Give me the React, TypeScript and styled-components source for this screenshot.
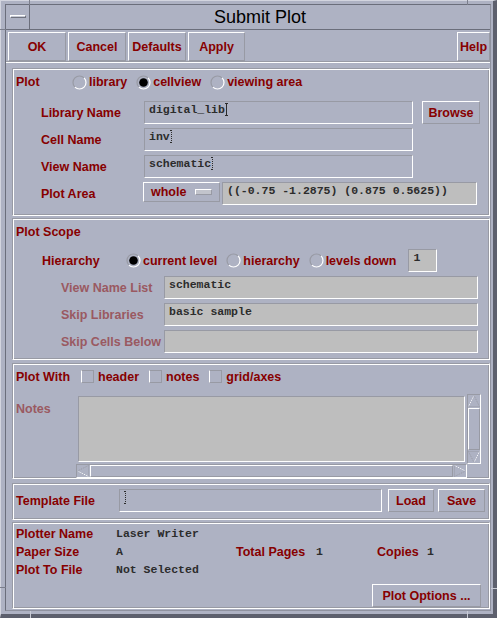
import React from 'react';
import styled, { createGlobalStyle, css } from 'styled-components';

const C = {
  bg: '#aeb2c3',
  field: '#bebebe',
  dark: '#989aa4',
  light: '#ffffff',
  red: '#870000',
  dim: '#9a5961',
  text: '#2c2c2c',
  frameDark: '#5d606d',
  frameLine: '#6b6e7b',
};

const SANS = `"Liberation Sans", Arial, sans-serif`;
const MONO = `"Liberation Mono", "Courier New", monospace`;

const Global = createGlobalStyle`
  html, body { margin: 0; padding: 0; background: ${C.bg}; }
  body { font-family: ${SANS}; }
`;

const Frame = styled.div`
  position: relative;
  box-sizing: border-box;
  width: 497px;
  height: 618px;
  background: ${C.bg};
  border-style: solid;
  border-width: 1px 4px 4px 1px;
  border-color: #d3d5df ${C.frameDark} ${C.frameDark} #d3d5df;
  padding: 3px 2px 3px 4px;
`;

const Tick = styled.div<{ $x: number; $y: number; $w: number; $h: number; $light?: boolean }>`
  position: absolute;
  left: ${p => p.$x}px;
  top: ${p => p.$y}px;
  width: ${p => p.$w}px;
  height: ${p => p.$h}px;
  background: ${p => (p.$light ? '#c9ccd6' : '#7b7e8b')};
`;

const Inner = styled.div`
  box-sizing: border-box;
  height: 100%;
  border: 1px solid;
  border-color: ${C.frameLine} #8f929f #8f929f ${C.frameLine};
  display: flex;
  flex-direction: column;
`;

const TitleBar = styled.div`
  display: flex;
  height: 24px;
  flex: none;
  border-bottom: 1px solid ${C.frameLine};
`;

const MenuBtn = styled.div`
  width: 23px;
  border-right: 1px solid ${C.frameLine};
  display: flex;
  align-items: center;
  justify-content: center;
`;

const MenuDash = styled.div`
  box-sizing: border-box;
  width: 16px;
  height: 3px;
  margin-top: -1px;
  border: 1px solid;
  border-color: #ffffff #6f727e #6f727e #ffffff;
  background: #c5c8d3;
`;

const Title = styled.div`
  flex: 1;
  text-align: center;
  font: 18px/24px ${SANS};
  color: #000;
`;

const ButtonBar = styled.div`
  display: flex;
  justify-content: space-between;
  padding: 2px 0 0 2px;
  flex: none;
`;

const ButtonGroup = styled.div`
  display: flex;
  gap: 2px;
`;

const raised = css`
  border: 1px solid;
  border-color: ${C.light} ${C.dark} ${C.dark} ${C.light};
`;
const sunken = css`
  border: 1px solid;
  border-color: ${C.dark} ${C.light} ${C.light} ${C.dark};
`;

const PushButton = styled.div<{ $w: number; $h?: number; $ml?: number }>`
  ${raised};
  box-sizing: border-box;
  width: ${p => p.$w}px;
  height: ${p => p.$h ?? 29}px;
  margin-left: ${p => p.$ml ?? 0}px;
  flex: none;
  display: flex;
  align-items: center;
  justify-content: center;
  font: bold 12.5px ${SANS};
  color: ${C.red};
  white-space: nowrap;
`;

const Separator = styled.div`
  flex: none;
  border-top: 1px solid ${C.dark};
  border-bottom: 1px solid ${C.light};
`;

const Content = styled.div`
  display: flex;
  flex-direction: column;
  padding: 5px 0 0 6px;
`;

const Panel = styled.div<{ $h: number; $mt?: number }>`
  box-sizing: border-box;
  height: ${p => p.$h}px;
  margin-top: ${p => p.$mt ?? 0}px;
  border: 1px solid;
  border-color: ${C.dark} ${C.light} ${C.light} ${C.dark};
  box-shadow: inset 1px 1px 0 ${C.light}, inset -1px -1px 0 ${C.dark};
  padding-left: 3px;
  display: flex;
  flex-direction: column;
`;

const Label = styled.span<{ $w?: number; $dim?: boolean }>`
  font: bold 12.5px/14px ${SANS};
  color: ${p => (p.$dim ? C.dim : C.red)};
  white-space: nowrap;
  ${p => (p.$w ? `width: ${p.$w}px; flex: none;` : '')}
`;

const HeaderRow = styled.div<{ $h?: number }>`
  display: flex;
  align-items: center;
  height: ${p => p.$h ?? 25}px;
  flex: none;
`;

const RadioGroup = styled.div`
  display: flex;
  align-items: center;
  gap: 9px;
`;

const RadioItem = styled.span`
  display: inline-flex;
  align-items: center;
  gap: 2px;
  font: bold 12.5px/14px ${SANS};
  color: ${C.red};
  white-space: nowrap;
`;

function Radio({ checked, children }: { checked?: boolean; children: React.ReactNode }) {
  return (
    <RadioItem>
      <svg width="15" height="15" viewBox="0 0 15 15">
        <path d="M2.9 12.1A6.5 6.5 0 0 1 12.1 2.9" fill="none" stroke={C.dark} strokeWidth="1.2" />
        <path d="M12.1 2.9A6.5 6.5 0 0 1 2.9 12.1" fill="none" stroke="#fff" strokeWidth="1.2" />
        {checked && <circle cx="7.5" cy="7.5" r="4.3" fill="#000" />}
      </svg>
      {children}
    </RadioItem>
  );
}

const CheckItem = styled.span`
  display: inline-flex;
  align-items: center;
  gap: 4px;
  margin-right: 10px;
  font: bold 12.5px/14px ${SANS};
  color: ${C.red};
`;

const CheckBox = styled.span`
  box-sizing: border-box;
  width: 13px;
  height: 13px;
  border: 1px solid;
  border-color: ${C.dark} ${C.dark} ${C.dark} ${C.light};
`;

const FormGrid = styled.div<{ $ml: number; $mt: number; $cols: string }>`
  display: grid;
  grid-template-columns: ${p => p.$cols};
  grid-auto-rows: 23px;
  row-gap: 4px;
  align-items: center;
  margin-left: ${p => p.$ml}px;
  margin-top: ${p => p.$mt}px;
`;

const Field = styled.div<{ $ro?: boolean; $w?: number; $ml?: number }>`
  ${sunken};
  box-sizing: border-box;
  height: 23px;
  ${p => (p.$w ? `width: ${p.$w}px; flex: none;` : '')}
  margin-left: ${p => p.$ml ?? 0}px;
  padding: 1px 4px;
  background: ${p => (p.$ro ? C.field : 'transparent')};
  font: bold 11.5px/14px ${MONO};
  color: ${C.text};
  white-space: pre;
  overflow: hidden;
`;

const Cursor = styled.span<{ $dotted?: boolean }>`
  position: relative;
  display: inline-block;
  width: 1px;
  height: 13px;
  margin-left: 1px;
  vertical-align: -3px;
  border-left: 1px ${p => (p.$dotted ? 'dotted' : 'solid')} ${C.text};
  &::before,
  &::after {
    content: '';
    position: absolute;
    left: -2px;
    width: 3px;
    height: 1px;
    background: ${p => (p.$dotted ? 'transparent' : C.text)};
    border-left: ${p => (p.$dotted ? `1px dotted ${C.text}` : 'none')};
  }
  &::before { top: 0; }
  &::after { bottom: 0; }
`;

const SideButton = styled(PushButton)`
  height: 23px;
`;

const AreaRow = styled.div`
  grid-column: 2 / 4;
  display: flex;
  align-items: flex-start;
  align-self: start;
  margin-left: -1px;
`;

const OptionButton = styled.div`
  ${raised};
  box-sizing: border-box;
  width: 77px;
  height: 20px;
  flex: none;
  display: flex;
  align-items: center;
  justify-content: space-between;
  padding: 0 7px;
  font: bold 12.5px ${SANS};
  color: ${C.red};
`;

const OptionMark = styled.span`
  ${raised};
  box-sizing: border-box;
  width: 17px;
  height: 6px;
  background: #c2c4cc;
`;

const ScopeRow = styled.div`
  display: flex;
  align-items: center;
  height: 23px;
  margin: 5px 0 0 26px;
`;

const NotesRow = styled.div`
  display: flex;
  margin-top: 5px;
`;

const NotesLabel = styled(Label)`
  align-self: flex-start;
  margin-top: 8px;
`;

const Scrolled = styled.div`
  display: grid;
  grid-template-columns: 391px 14px;
  grid-template-rows: 70px 14px;
`;

const TextArea = styled.div`
  ${sunken};
  margin: 2px;
  background: ${C.field};
`;

const VBar = styled.div`
  ${sunken};
  box-sizing: border-box;
  display: flex;
  flex-direction: column;
`;

const HBar = styled.div`
  ${sunken};
  box-sizing: border-box;
  display: flex;
`;

const Thumb = styled.div<{ $vertical?: boolean }>`
  ${raised};
  flex: 1;
  margin: ${p => (p.$vertical ? '1px 0' : '0 1px')};
`;

const ArrowSvg = styled.svg<{ $rot: number }>`
  flex: none;
  display: block;
  transform: rotate(${p => p.$rot}deg);
`;

function Arrow({ rot }: { rot: number }) {
  return (
    <ArrowSvg $rot={rot} width="12" height="12" viewBox="0 0 12 12">
      <line x1="0.5" y1="11.5" x2="6" y2="0.5" stroke="#fff" strokeDasharray="1 1" />
      <line x1="6" y1="0.5" x2="11.5" y2="11.5" stroke={C.dark} strokeDasharray="1 1" />
      <line x1="0.5" y1="11.5" x2="11.5" y2="11.5" stroke={C.dark} strokeDasharray="1 1" />
    </ArrowSvg>
  );
}

const TemplateRow = styled.div`
  display: flex;
  align-items: center;
  margin-top: 5px;
`;

const InfoGrid = styled.div`
  display: grid;
  grid-template-columns: 100px 120px 80px 61px 50px 1fr;
  grid-auto-rows: 18px;
  align-items: center;
  padding-top: 2px;
`;

const Value = styled.span`
  font: bold 11.5px/14px ${MONO};
  color: ${C.text};
  white-space: pre;
`;

const Footer = styled.div`
  display: flex;
  justify-content: flex-end;
  margin-top: 5px;
  padding-right: 8px;
`;

export default function App() {
  return (
    <>
      <Global />
      <Frame>
        <Tick $x={28} $y={-1} $w={1} $h={5} />
        <Tick $x={466} $y={-1} $w={1} $h={5} />
        <Tick $x={-1} $y={28} $w={6} $h={1} />
        <Tick $x={-1} $y={586} $w={6} $h={1} />
        <Tick $x={490} $y={587} $w={6} $h={1} $light />
        <Tick $x={29} $y={610} $w={1} $h={7} $light />
        <Tick $x={466} $y={610} $w={1} $h={7} $light />
        <Inner>
          <TitleBar>
            <MenuBtn>
              <MenuDash />
            </MenuBtn>
            <Title>Submit Plot</Title>
          </TitleBar>
          <ButtonBar>
            <ButtonGroup>
              <PushButton $w={58}>OK</PushButton>
              <PushButton $w={58}>Cancel</PushButton>
              <PushButton $w={58}>Defaults</PushButton>
              <PushButton $w={57}>Apply</PushButton>
            </ButtonGroup>
            <PushButton $w={33}>Help</PushButton>
          </ButtonBar>
          <Separator />
          <Content>
            <Panel $h={148}>
              <HeaderRow $h={26}>
                <Label $w={56}>Plot</Label>
                <RadioGroup>
                  <Radio>library</Radio>
                  <Radio checked>cellview</Radio>
                  <Radio>viewing area</Radio>
                </RadioGroup>
              </HeaderRow>
              <FormGrid $ml={25} $mt={6} $cols="103px 269px 67px">
                <Label>Library Name</Label>
                <Field>
                  digital_lib
                  <Cursor />
                </Field>
                <SideButton $w={58} $ml={9}>
                  Browse
                </SideButton>
                <Label>Cell Name</Label>
                <Field>
                  inv
                  <Cursor $dotted />
                </Field>
                <span />
                <Label>View Name</Label>
                <Field>
                  schematic
                  <Cursor $dotted />
                </Field>
                <span />
                <Label>Plot Area</Label>
                <AreaRow>
                  <OptionButton>
                    whole
                    <OptionMark />
                  </OptionButton>
                  <Field $ro $w={255} $ml={2}>
                    ((-0.75 -1.2875) (0.875 0.5625))
                  </Field>
                </AreaRow>
              </FormGrid>
            </Panel>

            <Panel $h={142} $mt={2}>
              <HeaderRow>
                <Label>Plot Scope</Label>
              </HeaderRow>
              <ScopeRow>
                <Label $w={84}>Hierarchy</Label>
                <RadioGroup>
                  <Radio checked>current level</Radio>
                  <Radio>hierarchy</Radio>
                  <Radio>levels down</Radio>
                </RadioGroup>
                <Field $ro $w={29} $ml={12}>
                  1
                </Field>
              </ScopeRow>
              <FormGrid $ml={45} $mt={4} $cols="103px 314px">
                <Label $dim>View Name List</Label>
                <Field $ro>schematic</Field>
                <Label $dim>Skip Libraries</Label>
                <Field $ro>basic sample</Field>
                <Label $dim>Skip Cells Below</Label>
                <Field $ro />
              </FormGrid>
            </Panel>

            <Panel $h={116} $mt={3}>
              <HeaderRow>
                <Label $w={65}>Plot With</Label>
                <CheckItem>
                  <CheckBox />
                  header
                </CheckItem>
                <CheckItem>
                  <CheckBox />
                  notes
                </CheckItem>
                <CheckItem>
                  <CheckBox />
                  grid/axes
                </CheckItem>
              </HeaderRow>
              <NotesRow>
                <NotesLabel $dim $w={60}>
                  Notes
                </NotesLabel>
                <Scrolled>
                  <TextArea />
                  <VBar>
                    <Arrow rot={0} />
                    <Thumb $vertical />
                    <Arrow rot={180} />
                  </VBar>
                  <HBar>
                    <Arrow rot={-90} />
                    <Thumb />
                    <Arrow rot={90} />
                  </HBar>
                </Scrolled>
              </NotesRow>
            </Panel>

            <Panel $h={37} $mt={4}>
              <TemplateRow>
                <Label $w={103}>Template File</Label>
                <Field $w={263}>
                  <Cursor $dotted />
                </Field>
                <SideButton $w={46} $ml={6}>
                  Load
                </SideButton>
                <SideButton $w={47} $ml={4}>
                  Save
                </SideButton>
              </TemplateRow>
            </Panel>

            <Panel $h={87} $mt={2}>
              <InfoGrid>
                <Label>Plotter Name</Label>
                <Value>Laser Writer</Value>
                <span />
                <span />
                <span />
                <span />
                <Label>Paper Size</Label>
                <Value>A</Value>
                <Label>Total Pages</Label>
                <Value>1</Value>
                <Label>Copies</Label>
                <Value>1</Value>
                <Label>Plot To File</Label>
                <Value>Not Selected</Value>
              </InfoGrid>
              <Footer>
                <SideButton $w={109}>Plot Options ...</SideButton>
              </Footer>
            </Panel>
          </Content>
        </Inner>
      </Frame>
    </>
  );
}
